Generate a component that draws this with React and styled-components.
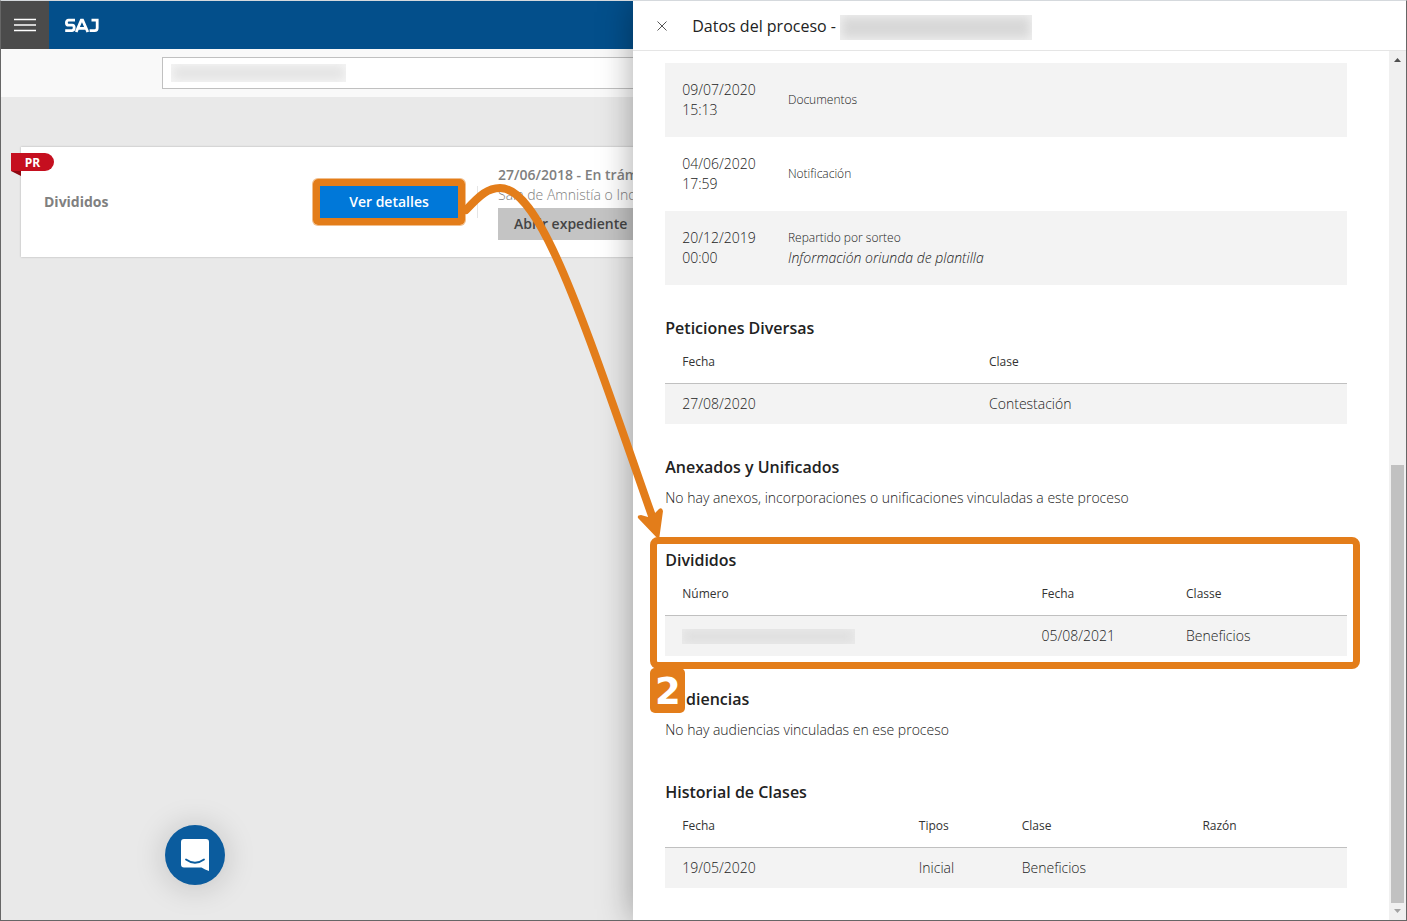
import React, { useState } from "react";
import styled, { createGlobalStyle } from "styled-components";

const GlobalStyle = createGlobalStyle`
    * {
        box-sizing: border-box;
    }

    body {
        margin: 0;
        font-family: "Open Sans", "Noto Sans", sans-serif;
        font-size: 14px;
        font-weight: 300;
        line-height: 20px;
        color: #222222;
    }

    button, input {
        font: inherit;
    }
`;

const Page = styled.div`
    position: relative;
    height: 100vh;
    overflow: hidden;
    background: #e9e9e9;
    border: 1px solid #666666;
    border-top-color: #d5d9dd;
`;

const TopBar = styled.header`
    display: flex;
    height: 48px;
    background: #034f8b;
`;

const MenuButton = styled.button`
    display: flex;
    align-items: center;
    justify-content: center;
    width: 48px;
    padding: 0;
    border: none;
    background: #4b4b4b;
    cursor: pointer;
`;

const Logo = styled.svg`
    margin: 17px 16px;
`;

const SearchBar = styled.div`
    display: flex;
    height: 48px;
    padding: 8px 161px;
    background: #f9f9f9;
`;

const SearchBox = styled.label`
    display: flex;
    align-items: center;
    flex: 1;
    padding: 0 8px;
    border: 1px solid #c0c0c0;
    background: #ffffff;
`;

const SearchInput = styled.input`
    flex: 1;
    height: 100%;
    border: none;
    outline: none;
    background: transparent;
`;

// Texto oculto por privacidade
const Redacted = styled.span`
    display: block;
    width: ${(props) => props.$width}px;
    height: ${(props) => props.$height}px;
    background: ${(props) => props.$color};
    box-shadow: inset 0 0 10px 2px ${(props) => props.$edge};
`;

const Card = styled.article`
    position: relative;
    display: grid;
    grid-template-columns: 276px 157px 1fr;
    align-items: center;
    height: 110px;
    margin: 50px 20px 0;
    padding: 0 23px;
    background: #ffffff;
    box-shadow: 0 0 2px rgba(0, 0, 0, 0.25);
`;

const Ribbon = styled.span`
    position: absolute;
    top: 6px;
    left: -10px;
    width: 43px;
    height: 18px;
    border-radius: 0 9px 9px 0;
    background: #c50f1f;
    color: #ffffff;
    font-size: 12px;
    font-weight: 700;
    line-height: 20px;
    text-align: center;

    &::after {
        content: "";
        position: absolute;
        top: 18px;
        left: 0;
        border-top: 5px solid #8e0912;
        border-left: 10px solid transparent;
    }
`;

const CardTitle = styled.h2`
    margin: 0;
    font-size: 14px;
    line-height: 22px;
    color: #808080;
`;

const CardAction = styled.div`
    position: relative;
    width: 138px;
`;

const PrimaryButton = styled.button`
    display: block;
    width: 100%;
    height: 32px;
    padding: 0;
    border: none;
    background: #0078d9;
    color: #ffffff;
    font-weight: 600;
    cursor: pointer;
`;

const Status = styled.div`
    display: flex;
    align-items: center;
    gap: 20px;
    white-space: nowrap;
`;

const Divider = styled.span`
    width: 1px;
    height: 32px;
    background: #e5e5e5;
`;

const StatusTitle = styled.div`
    font-weight: 600;
    color: #808080;
`;

const StatusPlace = styled.div`
    color: #808080;
`;

const SecondaryButton = styled.button`
    display: block;
    height: 32px;
    margin-top: 3px;
    padding: 0 16px;
    border: none;
    background: #c4c4c4;
    color: #444444;
    font-weight: 600;
    cursor: pointer;
`;

const ChatButton = styled.button`
    position: absolute;
    bottom: 35px;
    left: 164px;
    display: flex;
    align-items: center;
    justify-content: center;
    width: 60px;
    height: 60px;
    padding: 0;
    border: none;
    border-radius: 50%;
    background: #0b5c9e;
    box-shadow: 0 2px 32px rgba(0, 0, 0, 0.18);
    cursor: pointer;
`;

const Drawer = styled.aside`
    position: absolute;
    top: 0;
    right: 0;
    bottom: 0;
    display: flex;
    flex-direction: column;
    width: 55%;
    background: #ffffff;
    box-shadow: 0 0 32px rgba(0, 0, 0, 0.35);
`;

const DrawerHeader = styled.header`
    display: flex;
    align-items: center;
    height: 50px;
    padding: 0 24px;
    border-bottom: 1px solid #e5e5e5;
`;

const CloseButton = styled.button`
    display: flex;
    padding: 0;
    border: none;
    background: none;
    cursor: pointer;
`;

const DrawerTitle = styled.h1`
    margin: 0 4px 0 25px;
    font-size: 16px;
    font-weight: 500;
    line-height: 20px;
    color: #222222;
`;

const ProcessNumber = styled(Redacted)`
    margin-top: 4px;
`;

const DrawerBody = styled.div`
    display: flex;
    flex: 1;
    min-height: 0;
`;

const DrawerContent = styled.div`
    flex: 1;
    padding: 12px 42px 32px 32px;
    overflow: hidden;
`;

const Scrollbar = styled.div`
    display: flex;
    flex-direction: column;
    align-items: center;
    width: 17px;
    background: #f0f0f0;
`;

const ScrollArrow = styled.svg`
    flex: none;
    width: 17px;
    height: 17px;
    fill: ${(props) => props.$color};
`;

const ScrollTrack = styled.div`
    display: flex;
    flex: 1;
    align-items: flex-end;
`;

const ScrollThumb = styled.div`
    width: 13px;
    height: 52.5%;
    background: #c1c1c1;
`;

const Table = styled.table`
    width: 100%;
    table-layout: fixed;
    border-collapse: separate;
    border-spacing: 0;
`;

const HeadCell = styled.th`
    height: 43px;
    padding: 0 17px;
    border-bottom: 1px solid #c0c0c0;
    font-size: 12px;
    font-weight: 400;
    text-align: left;
    color: #333333;
`;

const Cell = styled.td`
    height: 40px;
    padding: 0 17px;
    background: #f3f3f3;
`;

const EventRow = styled.tr`
    &:nth-child(odd) {
        background: #f3f3f3;
    }
`;

const EventCell = styled.td`
    height: 74px;
    padding: 0 17px;
    font-size: ${(props) => (props.$small ? 12 : 14)}px;

    em {
        display: block;
        font-size: 14px;
    }
`;

const Section = styled.section`
    position: relative;
    margin-top: 32px;
`;

const SectionTitle = styled.h2`
    margin: 0;
    padding-bottom: 2px;
    font-size: 16px;
    font-weight: 600;
    line-height: 22px;
    color: #222222;
`;

const EmptyText = styled.p`
    margin: 0;
    padding: 8px 0 9px;
`;

const ButtonHighlight = styled.div`
    position: absolute;
    inset: -7px;
    border: 7px solid #e37d1a;
    border-radius: 5px;
    box-shadow: 0 0 0 1px rgba(227, 125, 26, 0.5);
    pointer-events: none;
`;

const SectionHighlight = styled.div`
    position: absolute;
    inset: -12px -13px -13px -15px;
    border: 7px solid #e37d1a;
    border-radius: 8px;
    pointer-events: none;
`;

const StepBadge = styled.span`
    position: absolute;
    top: 119px;
    left: -15px;
    z-index: 1;
    width: 35px;
    height: 45px;
    border-radius: 5px;
    background: #e37d1a;
    color: #ffffff;
    font-family: "DejaVu Sans", sans-serif;
    font-size: 37px;
    font-weight: 700;
    line-height: 48px;
    text-align: center;
`;

const Arrow = styled.svg`
    position: absolute;
    top: 0;
    left: 0;
    pointer-events: none;
`;

const events = [
    { date: "09/07/2020", time: "15:13", text: "Documentos" },
    { date: "04/06/2020", time: "17:59", text: "Notificación" },
    { date: "20/12/2019", time: "00:00", text: "Repartido por sorteo", note: "Información oriunda de plantilla" },
];

const hiddenNumber = <Redacted $width={173} $height={15} $color="#dedede" $edge="#ebebeb" />;

const DataTable = ({ widths, head, rows }) => (
    <Table>
        <colgroup>
            {widths.map((width, i) => <col key={i} style={{ width }} />)}
        </colgroup>
        <thead>
            <tr>
                {head.map((label) => <HeadCell key={label} scope="col">{label}</HeadCell>)}
            </tr>
        </thead>
        <tbody>
            {rows.map((row, i) => (
                <tr key={i}>
                    {row.map((value, j) => <Cell key={j}>{value}</Cell>)}
                </tr>
            ))}
        </tbody>
    </Table>
);

const App = () => {
    const [search, setSearch] = useState("");

    return (
        <Page>
            <GlobalStyle />
            <TopBar>
                <MenuButton type="button" aria-label="Menú">
                    <svg width="22" height="14" viewBox="0 0 22 14" stroke="#ffffff" strokeWidth="1.4">
                        <path d="M0 1.5h22M0 7h22M0 12.5h22" />
                    </svg>
                </MenuButton>
                <Logo width="34" height="15" viewBox="0 0 34 15" fill="none" stroke="#ffffff" strokeWidth="2.8" role="img" aria-label="SAJ">
                    <path d="M10 2.2H3.6Q1.4 2.2 1.4 4.7T3.6 7.2H7.2Q9.2 7.2 9.2 9.8T7 12.7H.2" />
                    <path d="M11.2 14L16.3 2.2H17.6L22.8 14M13.4 10.3H20.6" />
                    <path d="M26.5 2.2H32.2V10Q32.2 12.7 29.6 12.7H24.6" />
                </Logo>
            </TopBar>
            <SearchBar>
                <SearchBox>
                    <Redacted $width={175} $height={18} $color="#e4e4e4" $edge="#f5f5f5" />
                    <SearchInput
                        type="text"
                        aria-label="Buscar"
                        value={search}
                        onChange={(e) => setSearch(e.target.value)}
                    />
                </SearchBox>
            </SearchBar>

            <Card>
                <Ribbon>PR</Ribbon>
                <CardTitle>Divididos</CardTitle>
                <CardAction>
                    <PrimaryButton type="button">Ver detalles</PrimaryButton>
                    <ButtonHighlight />
                </CardAction>
                <Status>
                    <Divider />
                    <div>
                        <StatusTitle>27/06/2018 - En trámite</StatusTitle>
                        <StatusPlace>Sala de Amnistía o Indulto</StatusPlace>
                        <SecondaryButton type="button">Abrir expediente</SecondaryButton>
                    </div>
                </Status>
            </Card>

            <ChatButton type="button" aria-label="Abrir chat">
                <svg width="28" height="32" viewBox="0 0 28 32">
                    <path fill="#ffffff" d="M3 0H25Q28 0 28 3V32Q24 30.5 20.5 28.5H3Q0 28.5 0 25.5V3Q0 0 3 0Z" />
                    <path fill="none" stroke="#0b5c9e" strokeWidth="1.8" strokeLinecap="round" d="M5 20.5Q14 27 23 20.5" />
                </svg>
            </ChatButton>

            <Drawer>
                <DrawerHeader>
                    <CloseButton type="button" aria-label="Cerrar">
                        <svg width="10" height="10" viewBox="0 0 10 10" stroke="#555555">
                            <path d="M.5 .5l9 9M9.5 .5l-9 9" />
                        </svg>
                    </CloseButton>
                    <DrawerTitle>Datos del proceso -</DrawerTitle>
                    <ProcessNumber $width={192} $height={25} $color="#d8d8d8" $edge="#f0f0f0" />
                </DrawerHeader>
                <DrawerBody>
                    <DrawerContent>
                        <Table>
                            <colgroup>
                                <col style={{ width: "15.5%" }} />
                                <col />
                            </colgroup>
                            <tbody>
                                {events.map((event) => (
                                    <EventRow key={event.date}>
                                        <EventCell>{event.date}<br />{event.time}</EventCell>
                                        <EventCell $small>
                                            {event.text}
                                            {event.note && <em>{event.note}</em>}
                                        </EventCell>
                                    </EventRow>
                                ))}
                            </tbody>
                        </Table>

                        <Section>
                            <SectionTitle>Peticiones Diversas</SectionTitle>
                            <DataTable
                                widths={["45%", "55%"]}
                                head={["Fecha", "Clase"]}
                                rows={[["27/08/2020", "Contestación"]]}
                            />
                        </Section>

                        <Section>
                            <SectionTitle>Anexados y Unificados</SectionTitle>
                            <EmptyText>No hay anexos, incorporaciones o unificaciones vinculadas a este proceso</EmptyText>
                        </Section>

                        <Section>
                            <SectionTitle>Divididos</SectionTitle>
                            <DataTable
                                widths={["52.7%", "21.2%", "26.1%"]}
                                head={["Número", "Fecha", "Classe"]}
                                rows={[[hiddenNumber, "05/08/2021", "Beneficios"]]}
                            />
                            <SectionHighlight />
                            <StepBadge>2</StepBadge>
                        </Section>

                        <Section>
                            <SectionTitle>Audiencias</SectionTitle>
                            <EmptyText>No hay audiencias vinculadas en ese proceso</EmptyText>
                        </Section>

                        <Section>
                            <SectionTitle>Historial de Clases</SectionTitle>
                            <DataTable
                                widths={["34.7%", "15.1%", "26.5%", "23.7%"]}
                                head={["Fecha", "Tipos", "Clase", "Razón"]}
                                rows={[["19/05/2020", "Inicial", "Beneficios", ""]]}
                            />
                        </Section>
                    </DrawerContent>
                    <Scrollbar aria-hidden="true">
                        <ScrollArrow viewBox="0 0 17 17" $color="#505050">
                            <path d="M5 11h7L8.5 7Z" />
                        </ScrollArrow>
                        <ScrollTrack>
                            <ScrollThumb />
                        </ScrollTrack>
                        <ScrollArrow viewBox="0 0 17 17" $color="#a3a3a3">
                            <path d="M5 6h7L8.5 10Z" />
                        </ScrollArrow>
                    </Scrollbar>
                </DrawerBody>
            </Drawer>

            <Arrow width="680" height="560" viewBox="1 1 680 560">
                <path
                    d="M466 210C480 195 488 188 500 188C540 188 580 310 652 516"
                    fill="none"
                    stroke="#e37d1a"
                    strokeWidth="8"
                    strokeLinecap="round"
                />
                <path d="M659 540L638 518Q637 515 641 515L648 517L654 514L659 509Q662 507 663 511Z" fill="#e37d1a" />
            </Arrow>
        </Page>
    );
};

export default App;
